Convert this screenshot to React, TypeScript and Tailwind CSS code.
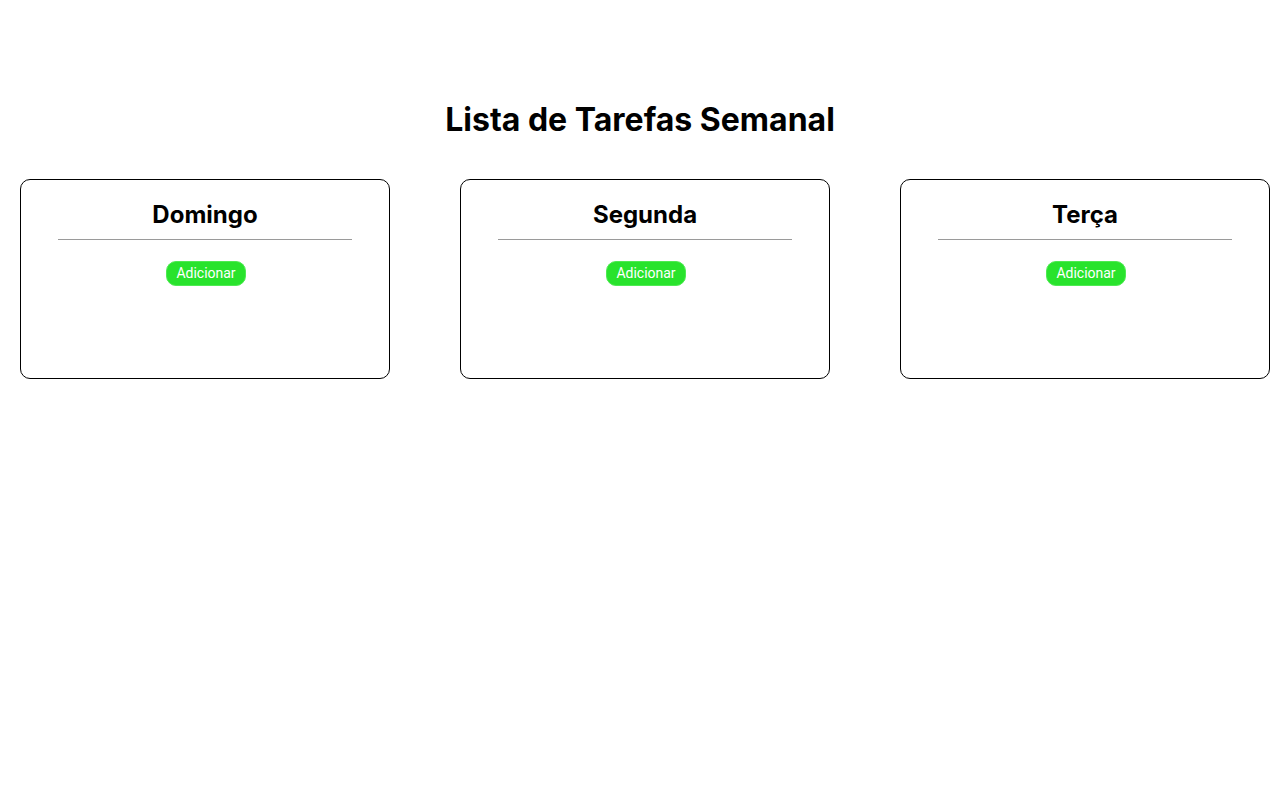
const days = ["Domingo", "Segunda", "Terça"];

const DayCard = ({ day }: { day: string }) => {
  return (
    <div className="w-[370px] h-[200px] border border-black rounded-[10px] flex flex-col items-center shrink-0">
      <h2 className="mt-[20px] text-[24px] leading-[30px] font-bold text-black">
        {day}
      </h2>
      <hr className="w-[80%] mt-[9px] border-0 border-t-[1px] border-[#9a9a9a]" />
      <button className="mt-[21px] ml-[2px] w-[80px] h-[25px] rounded-[10px] bg-[#28e32c] border border-[#4eea52] text-white text-[14px] font-['Roboto',sans-serif]">
        Adicionar
      </button>
    </div>
  );
};

export default function App() {
  return (
    <div className="min-h-screen bg-white font-['Inter',sans-serif]">
      <h1 className="pt-[100px] text-center text-[32px] leading-[40px] font-bold text-black">
        Lista de Tarefas Semanal
      </h1>
      <div className="mt-[39px] flex gap-[70px] pl-[20px]">
        {days.map((day) => (
          <DayCard key={day} day={day} />
        ))}
      </div>
    </div>
  );
}
